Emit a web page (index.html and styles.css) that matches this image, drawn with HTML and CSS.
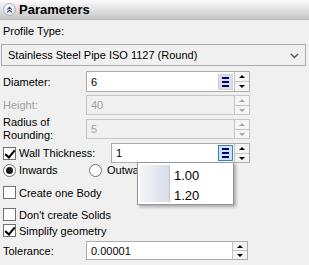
FILE: index.html
```html
<!DOCTYPE html>
<html lang="en">
  <head>
    <meta charset="UTF-8" />
    <title>Parameters</title>
    <link rel="stylesheet" href="styles.css">
  </head>
  <body>
    <div class="panel">
      <div class="panel-header">
        <span class="collapse-icon">
          <svg width="12" height="12" viewBox="0 0 12 12">
            <path d="M3.5 5.5 L6 3 L8.5 5.5 M3.5 8.5 L6 6 L8.5 8.5" fill="none" stroke="#3b4a7a" stroke-width="1.2"/>
          </svg>
        </span>
        <span class="panel-title">Parameters</span>
      </div>

      <div class="panel-body">
        <div class="caption">Profile Type:</div>
        <div class="select">
          <span class="select-text">Stainless Steel Pipe ISO 1127 (Round)</span>
          <svg class="select-arrow" width="9" height="6" viewBox="0 0 9 6">
            <path d="M1 1 L4.5 4.5 L8 1" fill="none" stroke="#555" stroke-width="1.4"/>
          </svg>
        </div>

        <div class="row row-diameter">
          <span class="label">Diameter:</span>
          <div class="field">
            <span class="field-value">6</span>
            <span class="list-btn"><i></i><i></i><i></i></span>
            <span class="spin"><span class="spin-up"></span><span class="spin-down"></span></span>
          </div>
        </div>

        <div class="row row-height">
          <span class="label label-off">Height:</span>
          <div class="field field-off">
            <span class="field-value">40</span>
            <span class="spin"><span class="spin-up"></span><span class="spin-down"></span></span>
          </div>
        </div>

        <div class="row row-radius">
          <span class="label label-two">Radius of<br>Rounding:</span>
          <div class="field field-off">
            <span class="field-value">5</span>
            <span class="spin"><span class="spin-up"></span><span class="spin-down"></span></span>
          </div>
        </div>

        <div class="row row-wall">
          <span class="check check-on"></span>
          <span class="label label-wall">Wall Thickness:</span>
          <div class="field field-wall">
            <span class="field-value">1</span>
            <span class="list-btn list-btn-hot"><i></i><i></i><i></i></span>
            <span class="spin"><span class="spin-up"></span><span class="spin-down"></span></span>
          </div>
        </div>

        <div class="row row-radio">
          <span class="radio-option">
            <span class="radio radio-on"></span>
            <span class="option-text">Inwards</span>
          </span>
          <span class="radio-option">
            <span class="radio"></span>
            <span class="option-text option-text-wide">Outwards</span>
          </span>
        </div>

        <div class="row row-option row-body">
          <span class="check"></span>
          <span class="option-text">Create one Body</span>
        </div>
        <div class="row row-option row-solids">
          <span class="check"></span>
          <span class="option-text">Don't create Solids</span>
        </div>
        <div class="row row-option row-simplify">
          <span class="check check-on"></span>
          <span class="option-text">Simplify geometry</span>
        </div>

        <div class="row row-tolerance">
          <span class="label">Tolerance:</span>
          <div class="field field-tolerance">
            <span class="field-value">0.00001</span>
            <span class="spin"><span class="spin-up"></span><span class="spin-down"></span></span>
          </div>
        </div>
      </div>

      <!-- drop-down of the Wall Thickness list button -->
      <div class="popup">
        <div class="popup-gutter"></div>
        <ul class="popup-list">
          <li>1.00</li>
          <li>1.20</li>
        </ul>
      </div>
    </div>
  </body>
</html>
```

FILE: styles.css
```css
* {
  padding: 0;
  margin: 0;
  box-sizing: border-box;
}

body {
  font-family: "Liberation Sans", Arial, sans-serif;
  font-size: 11px;
  color: #000;
  background-color: #f0f0f0;
}

.panel {
  position: relative;
  width: 309px;
  height: 265px;
}

.panel-header {
  display: flex;
  align-items: center;
  height: 20px;
  padding-left: 3px;
  background: linear-gradient(#fbfbfb, #e4e4e4 45%, #c6c6c6);
  border-bottom: 1px solid #b8b8b8;
}

.collapse-icon {
  display: flex;
  align-items: center;
  justify-content: center;
  width: 13px;
  height: 13px;
  border: 1px solid #a9aebb;
  border-radius: 50%;
  background: radial-gradient(circle at 40% 35%, #ffffff, #d4d8e4);
}

.panel-title {
  margin-left: 3px;
  font-size: 13px;
  font-weight: bold;
}

.panel-body {
  padding: 0 3px 0 1px;
}

.caption {
  height: 13px;
  margin: 5px 0 0 2px;
  line-height: 13px;
}

.select {
  display: flex;
  align-items: center;
  justify-content: space-between;
  height: 22px;
  margin-top: 6px;
  padding: 0 6px 0 6px;
  background: #f0f0f0;
  border: 1px solid #acacac;
}

.select-arrow {
  margin-top: 1px;
}

.row {
  display: flex;
  align-items: center;
}

.label {
  width: 85px;
  padding-left: 2px;
}

.label-off {
  color: #a0a0a0;
}

.label-two {
  line-height: 13px;
}

.row-diameter {
  margin-top: 5px;
  height: 21px;
}

.row-height {
  margin-top: 3px;
  height: 20px;
}

.row-radius {
  margin-top: 4px;
  height: 20px;
}

.row-wall {
  margin-top: 4px;
  height: 20px;
}

.field {
  display: flex;
  align-items: center;
  width: 164px;
  height: 100%;
  background: #fff;
  border: 1px solid #adadad;
}

.field-off {
  background: #f0f0f0;
  border-color: #c6c6c6;
  color: #a0a0a0;
}

.field-value {
  flex: 1;
  padding-left: 4px;
}

.list-btn {
  display: flex;
  flex-direction: column;
  justify-content: center;
  gap: 2px;
  width: 15px;
  height: 16px;
  margin-right: 1px;
  padding: 0 3px;
  background: #dcdde2;
  border: 1px solid #d0d0d8;
}

.list-btn i {
  display: block;
  height: 2px;
  background: #00007a;
}

.list-btn-hot {
  background: #cce4f7;
  border-color: #3c7fb1;
}

.spin {
  display: flex;
  flex-direction: column;
  width: 15px;
  height: 100%;
  border-left: 1px solid #c4c4c4;
  background: #f4f4f4;
}

.spin-up,
.spin-down {
  position: relative;
  flex: 1;
}

.spin-up {
  border-bottom: 1px solid #c4c4c4;
}

.spin-up::after,
.spin-down::after {
  position: absolute;
  left: 4px;
  content: "";
  border-left: 3px solid transparent;
  border-right: 3px solid transparent;
}

.spin-up::after {
  top: 3px;
  border-bottom: 3px solid #000;
}

.spin-down::after {
  top: 3px;
  border-top: 3px solid #000;
}

.field-off .spin-up::after {
  border-bottom-color: #a8a8a8;
}

.field-off .spin-down::after {
  border-top-color: #a8a8a8;
}

.field-wall {
  width: 139px;
}

.label-wall {
  width: 95px;
  padding-left: 3px;
}

.check,
.radio {
  position: relative;
  flex: none;
  width: 13px;
  height: 13px;
  margin-left: 2px;
  background: #fff;
  border: 1px solid #707070;
}

.check-on::after {
  position: absolute;
  left: 3px;
  top: 0px;
  width: 4px;
  height: 8px;
  content: "";
  border-right: 2px solid #000;
  border-bottom: 2px solid #000;
  transform: rotate(40deg);
}

.radio {
  border-radius: 50%;
}

.radio-on::after {
  position: absolute;
  left: 2px;
  top: 2px;
  width: 7px;
  height: 7px;
  content: "";
  border-radius: 50%;
  background: #1a1a1a;
}

.radio-option {
  display: flex;
  align-items: center;
  width: 86px;
}

.option-text {
  padding-left: 3px;
}

.option-text-wide {
  padding-left: 5px;
}

.row-radio {
  height: 14px;
}

.row-option {
  height: 15px;
}

.row-body {
  margin-top: 8px;
}

.row-solids {
  margin-top: 7px;
}

.row-simplify {
  margin-top: 1px;
}

.row-tolerance {
  margin-top: 3px;
  height: 19px;
}

.field-tolerance {
  width: 162px;
}

.popup {
  position: absolute;
  top: 162px;
  left: 137px;
  display: flex;
  width: 97px;
  height: 43px;
  background: #fff;
  border: 1px solid #979797;
  box-shadow: 2px 2px 3px rgba(0, 0, 0, 0.3);
}

.popup-gutter {
  width: 30px;
  margin: 2px 0 2px 2px;
  background: linear-gradient(to right, #f4f5f8, #d9dde8);
  border-right: 1px solid #c5c5c5;
}

.popup-list {
  list-style: none;
  padding: 3px 0 0 4px;
  font-size: 13px;
}

.popup-list li {
  height: 20px;
  line-height: 20px;
}
```
